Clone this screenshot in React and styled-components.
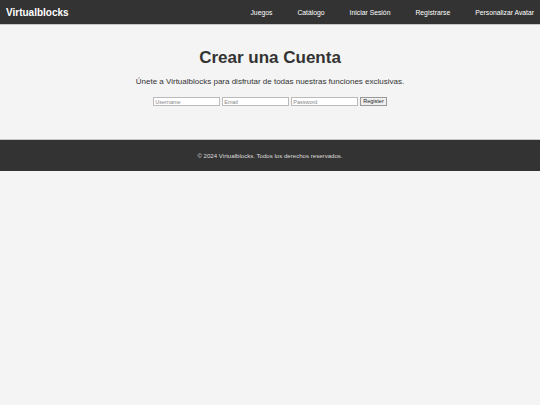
import React from "react";
import styled, { createGlobalStyle } from "styled-components";

const Global = createGlobalStyle`
  html, body { margin: 0; padding: 0; background: #f4f4f4; }
  body { font-family: "Liberation Sans", Arial, sans-serif; color: #333; }
  * { box-sizing: border-box; }
`;

const Header = styled.header`
  background: #333;
  height: 25px;
  border-bottom: 1px solid #c8c8c8;
  display: flex;
  align-items: center;
  justify-content: space-between;
  padding: 0 6px;
`;

const Logo = styled.div`
  color: #fff;
  font-weight: bold;
  font-size: 10px;
`;

const Nav = styled.nav`
  display: flex;
  gap: 25px;
`;

const NavLink = styled.a`
  color: #fff;
  font-size: 6.8px;
  text-decoration: none;
`;

const Main = styled.main`
  display: flex;
  flex-direction: column;
  align-items: center;
  padding: 22px 0 33px;
`;

const Title = styled.h1`
  margin: 0;
  font-size: 17px;
  line-height: 21px;
  font-weight: bold;
  color: #333;
`;

const Subtitle = styled.p`
  margin: 9px 0 0;
  font-size: 8px;
  color: #333;
`;

const Form = styled.form`
  display: flex;
  gap: 2px;
  margin-top: 11px;
  align-items: center;
`;

const Input = styled.input`
  width: 67px;
  height: 9px;
  padding: 0 1px;
  font-size: 5.5px;
  font-family: "Liberation Sans", Arial, sans-serif;
  border: 1px solid #bbb;
  background: #fff;
  outline: none;
  &::placeholder { color: #888; }
`;

const Button = styled.button`
  height: 9px;
  padding: 0 2px;
  font-size: 5.5px;
  font-family: "Liberation Sans", Arial, sans-serif;
  border: 1px solid #999;
  background: #efefef;
  color: #222;
  line-height: 1;
`;

const Footer = styled.footer`
  background: #333;
  border-top: 1px solid #c8c8c8;
  height: 32px;
  display: flex;
  align-items: center;
  justify-content: center;
  color: #ddd;
  font-size: 6.1px;
`;

export default function App() {
  return (
    <>
      <Global />
      <Header>
        <Logo>Virtualblocks</Logo>
        <Nav>
          <NavLink href="#">Juegos</NavLink>
          <NavLink href="#">Catálogo</NavLink>
          <NavLink href="#">Iniciar Sesión</NavLink>
          <NavLink href="#">Registrarse</NavLink>
          <NavLink href="#">Personalizar Avatar</NavLink>
        </Nav>
      </Header>
      <Main>
        <Title>Crear una Cuenta</Title>
        <Subtitle>Únete a Virtualblocks para disfrutar de todas nuestras funciones exclusivas.</Subtitle>
        <Form onSubmit={(e) => e.preventDefault()}>
          <Input type="text" placeholder="Username" />
          <Input type="email" placeholder="Email" />
          <Input type="password" placeholder="Password" />
          <Button type="submit">Register</Button>
        </Form>
      </Main>
      <Footer>© 2024 Virtualblocks. Todos los derechos reservados.</Footer>
    </>
  );
}
